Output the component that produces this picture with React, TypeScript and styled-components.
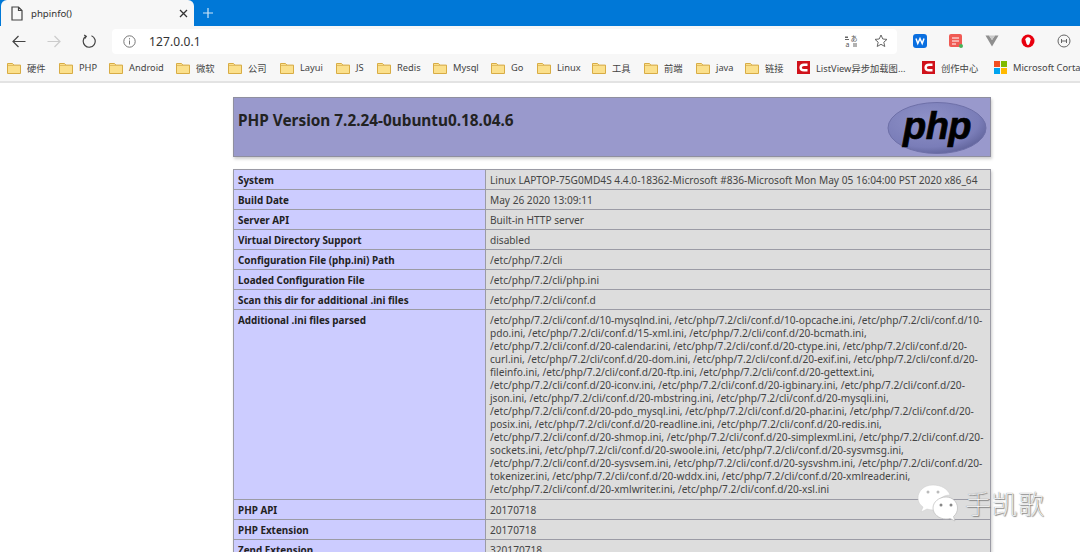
import React from "react";
import styled, { createGlobalStyle } from "styled-components";

const Global = createGlobalStyle`
  html, body { margin: 0; padding: 0; background: #fff; }
  body { font-family: "Noto Sans", "Noto Sans CJK SC", sans-serif; }
`;
const Page = styled.div`width:1080px;height:552px;overflow:hidden;position:relative;background:#fff;`;
const TabStrip = styled.div`height:26px;background:#0078d7;display:flex;align-items:flex-end;padding-left:1px;`;
const Tab = styled.div`width:193px;height:26px;background:#f7f7f7;border-radius:6px 6px 0 0;display:flex;align-items:center;box-sizing:border-box;padding:0 6px 0 10px;color:#333;font-size:9.6px;`;
const TabTitle = styled.span`flex:1;margin-left:8px;`;
const NewTab = styled.div`margin-left:8px;height:26px;display:flex;align-items:center;`;
const Toolbar = styled.div`height:28px;background:#f7f7f7;display:flex;align-items:center;box-sizing:border-box;padding:2px 0 0 12px;`;
const NavIcons = styled.div`display:flex;align-items:center;gap:21px;width:100px;`;
const UrlBar = styled.div`width:785px;height:25px;background:#fff;border-radius:4px;display:flex;align-items:center;box-sizing:border-box;padding:0 9px 0 11px;`;
const UrlText = styled.span`flex:1;margin-left:13px;font-size:12px;color:#333;letter-spacing:.1px;`;
const UrlTools = styled.div`display:flex;align-items:center;gap:16px;`;
const Extensions = styled.div`display:flex;align-items:center;margin-left:16px;gap:22px;`;
const Bookmarks = styled.div`height:29px;background:#f7f7f7;border-bottom:2px solid #e3e3e3;box-sizing:border-box;display:flex;align-items:center;padding-left:7px;white-space:nowrap;overflow:hidden;`;
const Bookmark = styled.div<{ $w: number }>`width:${p => p.$w}px;flex:none;display:flex;align-items:center;gap:6px;font-size:9.3px;color:#444;`;
const Main = styled.main`width:758px;margin:14px 0 0 233px;`;
const DataTable = styled.table`border-collapse:collapse;width:758px;table-layout:fixed;box-shadow:1px 2px 3px #ccc;font-size:10.15px;color:#333;`;
const HeaderTable = styled(DataTable)`height:60px;margin-bottom:12px;`;
const HeaderCell = styled.td`background:#9999cc;border:1px solid #8f8f9f;padding:0 4px;position:relative;vertical-align:top;`;
const Title = styled.h1`margin:12px 0 0;font-size:15.35px;line-height:20px;font-weight:700;color:#222;`;
const LogoWrap = styled.div`position:absolute;right:3px;top:3px;line-height:0;`;
const KeyCell = styled.td`width:252px;background:#ccccff;border:1px solid #9b9ba5;padding:2px 4px 0;font-weight:700;font-size:9.9px;vertical-align:top;line-height:17px;box-sizing:border-box;height:20px;color:#222;`;
const ValueCell = styled.td`background:#dddddd;border:1px solid #9b9ba5;padding:2px 4px 0;vertical-align:top;line-height:17px;height:20px;box-sizing:border-box;white-space:nowrap;color:#444;`;
const IniLines = styled.div`line-height:13px;padding:2px 0 3px;`;
const Watermark = styled.div`position:absolute;left:917px;top:484px;display:flex;align-items:center;gap:6px;`;
const WatermarkText = styled.span`font-family:"Noto Sans CJK SC",sans-serif;font-weight:100;font-size:26px;letter-spacing:.5px;color:#fff;text-shadow:0 0 1px #555,1px 1px 1px #777;line-height:1;`;

const Folder = () => (
  <svg width="14" height="12" viewBox="0 0 14 12"><path d="M.5 1.5h5l1.400 1.600h6.600v8.400H.5z" fill="#fbe08c" stroke="#d8ac45" /><path d="M1 3.500h12" stroke="#e2bd62" /></svg>
);
const CLogo = () => (
  <svg width="13" height="13" viewBox="0 0 13 13"><rect width="13" height="13" fill="#d0121b" /><path d="M10.500 3.700H7Q3.600 3.700 3.600 6.500T7 9.300h3.500" fill="none" stroke="#fff" strokeWidth="2.400" /></svg>
);
const Windows = () => (
  <svg width="13" height="13" viewBox="0 0 13 13"><rect width="6" height="6" fill="#f25022" /><rect x="7" width="6" height="6" fill="#7fba00" /><rect y="7" width="6" height="6" fill="#00a4ef" /><rect x="7" y="7" width="6" height="6" fill="#ffb900" /></svg>
);

const folders: [string, number][] = [["硬件",52],["PHP",50],["Android",67],["微软",52],["公司",52],["Layui",56],["JS",41],["Redis",56],["Mysql",58],["Go",46],["Linux",55],["工具",52],["前端",52],["java",49],["链接",52]];

const rows: [string, string][] = [
  ["System","Linux LAPTOP-75G0MD4S 4.4.0-18362-Microsoft #836-Microsoft Mon May 05 16:04:00 PST 2020 x86_64"],
  ["Build Date","May 26 2020 13:09:11"],
  ["Server API","Built-in HTTP server"],
  ["Virtual Directory Support","disabled"],
  ["Configuration File (php.ini) Path","/etc/php/7.2/cli"],
  ["Loaded Configuration File","/etc/php/7.2/cli/php.ini"],
  ["Scan this dir for additional .ini files","/etc/php/7.2/cli/conf.d"],
];
const rowsAfter: [string, string][] = [["PHP API","20170718"],["PHP Extension","20170718"],["Zend Extension","320170718"]];
const ini = [
"/etc/php/7.2/cli/conf.d/10-mysqlnd.ini, /etc/php/7.2/cli/conf.d/10-opcache.ini, /etc/php/7.2/cli/conf.d/10-",
"pdo.ini, /etc/php/7.2/cli/conf.d/15-xml.ini, /etc/php/7.2/cli/conf.d/20-bcmath.ini,",
"/etc/php/7.2/cli/conf.d/20-calendar.ini, /etc/php/7.2/cli/conf.d/20-ctype.ini, /etc/php/7.2/cli/conf.d/20-",
"curl.ini, /etc/php/7.2/cli/conf.d/20-dom.ini, /etc/php/7.2/cli/conf.d/20-exif.ini, /etc/php/7.2/cli/conf.d/20-",
"fileinfo.ini, /etc/php/7.2/cli/conf.d/20-ftp.ini, /etc/php/7.2/cli/conf.d/20-gettext.ini,",
"/etc/php/7.2/cli/conf.d/20-iconv.ini, /etc/php/7.2/cli/conf.d/20-igbinary.ini, /etc/php/7.2/cli/conf.d/20-",
"json.ini, /etc/php/7.2/cli/conf.d/20-mbstring.ini, /etc/php/7.2/cli/conf.d/20-mysqli.ini,",
"/etc/php/7.2/cli/conf.d/20-pdo_mysql.ini, /etc/php/7.2/cli/conf.d/20-phar.ini, /etc/php/7.2/cli/conf.d/20-",
"posix.ini, /etc/php/7.2/cli/conf.d/20-readline.ini, /etc/php/7.2/cli/conf.d/20-redis.ini,",
"/etc/php/7.2/cli/conf.d/20-shmop.ini, /etc/php/7.2/cli/conf.d/20-simplexml.ini, /etc/php/7.2/cli/conf.d/20-",
"sockets.ini, /etc/php/7.2/cli/conf.d/20-swoole.ini, /etc/php/7.2/cli/conf.d/20-sysvmsg.ini,",
"/etc/php/7.2/cli/conf.d/20-sysvsem.ini, /etc/php/7.2/cli/conf.d/20-sysvshm.ini, /etc/php/7.2/cli/conf.d/20-",
"tokenizer.ini, /etc/php/7.2/cli/conf.d/20-wddx.ini, /etc/php/7.2/cli/conf.d/20-xmlreader.ini,",
"/etc/php/7.2/cli/conf.d/20-xmlwriter.ini, /etc/php/7.2/cli/conf.d/20-xsl.ini",
];

export default function App() {
  return (
    <Page>
      <Global />
      <TabStrip>
        <Tab>
          <svg width="12" height="15" viewBox="0 0 12 15" fill="none" stroke="#444" strokeWidth="1.2"><path d="M1 1h6.500L11 4.500V14H1zM7.500 1v3.500H11" /></svg>
          <TabTitle>phpinfo()</TabTitle>
          <svg width="9" height="9" viewBox="0 0 9 9" stroke="#333" strokeWidth="1.3"><path d="M1 1l7 7M8 1L1 8" /></svg>
        </Tab>
        <NewTab><svg width="12" height="12" viewBox="0 0 12 12" stroke="#cfe6f8" strokeWidth="1.2"><path d="M6 1v10M1 6h10" /></svg></NewTab>
      </TabStrip>
      <Toolbar>
        <NavIcons>
          <svg width="14" height="13" viewBox="0 0 14 13" fill="none" stroke="#444" strokeWidth="1.2"><path d="M13.500 6.500H1M6.500 1 1 6.500 6.500 12" /></svg>
          <svg width="14" height="13" viewBox="0 0 14 13" fill="none" stroke="#ccc" strokeWidth="1.2"><path d="M.5 6.500H13M7.500 1 13 6.500 7.500 12" /></svg>
          <svg width="14" height="14" viewBox="0 0 14 14" fill="none" stroke="#444" strokeWidth="1.2"><path d="M3.800 2.300A6 6 0 1 0 9.500 1.700" /><path d="M2.200 1 4.300 2.500 2.700 4.700" /></svg>
        </NavIcons>
        <UrlBar>
          <svg width="13" height="13" viewBox="0 0 13 13" fill="none" stroke="#777"><circle cx="6.500" cy="6.500" r="5.700" /><path d="M6.500 5.500v4M6.500 3.200v1.200" /></svg>
          <UrlText>127.0.0.1</UrlText>
          <UrlTools>
            <svg width="14" height="14" viewBox="0 0 14 14">
              <path d="M1 2.500h3v1.500H1zM1 5h4v1H1zM9 9.500h4v1H9zM9 11.500h4v1H9z" fill="#666" />
              <text x="10" y="6.500" textAnchor="middle" fontSize="7" fill="#555" fontFamily="Noto Sans CJK JP">あ</text>
              <text x="3.500" y="13" textAnchor="middle" fontSize="7" fill="#555" fontFamily="Noto Sans">a</text>
            </svg>
            <svg width="14" height="14" viewBox="0 0 14 14" fill="none" stroke="#666"><path d="M7 1l1.800 4 4.200.4-3.200 2.800 1 4.300L7 10.300 3.200 12.500l1-4.300L1 5.400 5.200 5z" /></svg>
          </UrlTools>
        </UrlBar>
        <Extensions>
          <svg width="14" height="14" viewBox="0 0 14 14"><rect width="14" height="14" rx="3" fill="#0a6fe0" /><path d="M3 4.500l1.800 5 2.200-5 2.200 5L11 4.500" fill="none" stroke="#fff" strokeWidth="1.500" /></svg>
          <svg width="14" height="14" viewBox="0 0 14 14"><rect width="13" height="13" rx="2" fill="#f05a54" /><path d="M3 4h7M3 7h7M3 10h4" stroke="#fff" /><circle cx="12" cy="12" r="2" fill="#47b35a" /></svg>
          <svg width="14" height="14" viewBox="0 0 14 14"><path d="M.5 1.500 4 1.500 7 6 10 1.500h3.500L7 12.500z" fill="#8f8f8f" /><path d="M4 1.500h6L7 6z" fill="#c9c9c9" /></svg>
          <svg width="14" height="14" viewBox="0 0 14 14"><ellipse cx="7" cy="7" rx="6.500" ry="6.500" fill="#e8000f" /><path d="M4.300 5.500C4.800 3.800 5.800 3.300 7 3.300s2.200.5 2.700 2.200L8.500 9.800C8 10.800 7.500 11 7 11s-1-.2-1.500-1.200z" fill="#fff" /></svg>
          <svg width="14" height="14" viewBox="0 0 14 14" fill="none" stroke="#666"><circle cx="7" cy="7" r="6" /><path d="M4.500 5v4M9.500 5v4M4.500 7h5" /></svg>
        </Extensions>
      </Toolbar>
      <Bookmarks>
        {folders.map(([n, w]) => (<Bookmark key={n} $w={w}><Folder />{n}</Bookmark>))}
        <Bookmark $w={125}><CLogo />ListView异步加载图...</Bookmark>
        <Bookmark $w={72}><CLogo />创作中心</Bookmark>
        <Bookmark $w={100}><Windows />Microsoft Cortana</Bookmark>
      </Bookmarks>
      <Main>
        <HeaderTable>
          <tbody>
            <tr>
              <HeaderCell>
                <Title>PHP Version 7.2.24-0ubuntu0.18.04.6</Title>
                <LogoWrap>
                  <svg width="100" height="54" viewBox="0 0 100 54">
                    <defs><radialGradient id="g" cx="40%" cy="35%" r="70%"><stop offset="0" stopColor="#8f92c8" /><stop offset=".75" stopColor="#7a7db8" /><stop offset="1" stopColor="#5f6299" /></radialGradient></defs>
                    <ellipse cx="50" cy="27" rx="49" ry="25.500" fill="url(#g)" stroke="#6e70a8" />
                    <text x="50" y="38" textAnchor="middle" fontFamily="Liberation Sans" fontStyle="italic" fontWeight="700" fontSize="38" letterSpacing="-.5" fill="#000" stroke="#000" strokeWidth=".7">php</text>
                  </svg>
                </LogoWrap>
              </HeaderCell>
            </tr>
          </tbody>
        </HeaderTable>
        <DataTable>
          <tbody>
            {rows.map(([k, v]) => (<tr key={k}><KeyCell>{k}</KeyCell><ValueCell>{v}</ValueCell></tr>))}
            <tr>
              <KeyCell>Additional .ini files parsed</KeyCell>
              <ValueCell><IniLines>{ini.map(l => <div key={l}>{l}</div>)}</IniLines></ValueCell>
            </tr>
            {rowsAfter.map(([k, v]) => (<tr key={k}><KeyCell>{k}</KeyCell><ValueCell>{v}</ValueCell></tr>))}
          </tbody>
        </DataTable>
      </Main>
      <Watermark>
        <svg width="42" height="38" viewBox="0 0 42 38">
          <path d="M16 1C7 1 1 7 1 14c0 4 2 7 5 9l-2 5 6-3c2 .6 4 1 6 1 1 0 2 0 3-.2C18 18 24 11 33 11 31 5 24 1 16 1z" fill="#fff" stroke="#ccc" strokeWidth=".5" />
          <path d="M29 13c-7 0-13 5-13 11s6 11 13 11c1.500 0 3-.2 4-.6l5 2.600-1.500-4.500c2.500-2 4-5 4-8.500 0-6-5-11-11.500-11z" fill="#fff" stroke="#bbb" strokeWidth=".7" />
          <circle cx="11" cy="8" r="1.500" fill="#bbb" /><circle cx="21" cy="8" r="1.500" fill="#bbb" />
          <circle cx="24" cy="21" r="1.500" fill="#888" /><circle cx="34" cy="21" r="1.500" fill="#888" />
        </svg>
        <WatermarkText>手凯歌</WatermarkText>
      </Watermark>
    </Page>
  );
}
